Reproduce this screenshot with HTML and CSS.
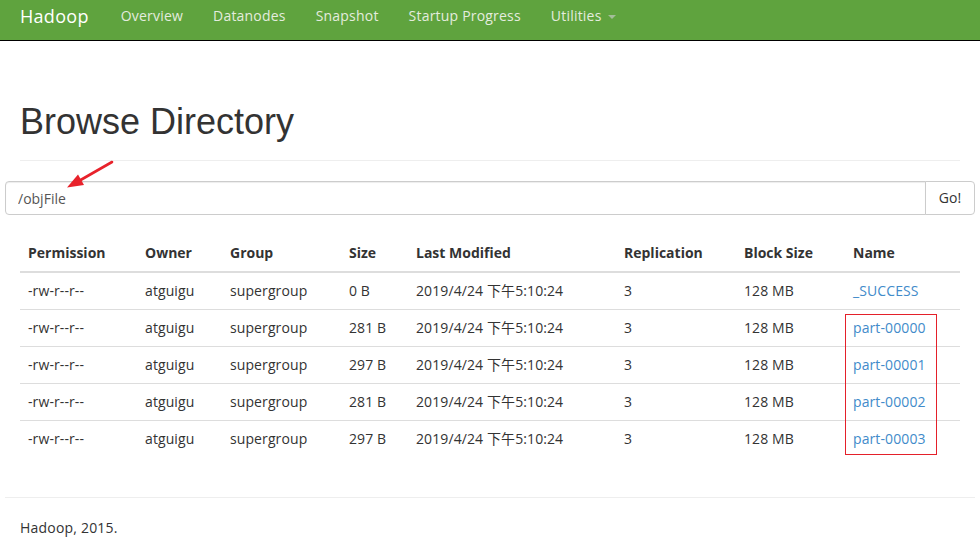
FILE: index.html
```html
<!DOCTYPE html>
<html>
<head>
<meta charset="utf-8">
<title>Browsing HDFS</title>
<link rel="stylesheet" href="styles.css">
</head>
<body>
<header class="navbar">
  <a class="brand" href="#">Hadoop</a>
  <nav class="nav">
    <a href="#">Overview</a>
    <a href="#">Datanodes</a>
    <a href="#">Snapshot</a>
    <a href="#">Startup Progress</a>
    <a href="#">Utilities <span class="caret"></span></a>
  </nav>
</header>

<main class="page">
  <div class="inner">
    <h1 class="page-header">Browse Directory</h1>
  </div>

  <div class="input-group">
    <input class="path" type="text" value="/objFile">
    <button class="go" type="button">Go!</button>
  </div>

  <div class="inner table-wrap">
    <table class="listing">
      <colgroup>
        <col class="c1"><col class="c2"><col class="c3"><col class="c4">
        <col class="c5"><col class="c6"><col class="c7"><col class="c8">
      </colgroup>
      <thead>
        <tr><th>Permission</th><th>Owner</th><th>Group</th><th>Size</th><th>Last Modified</th><th>Replication</th><th>Block Size</th><th>Name</th></tr>
      </thead>
      <tbody>
        <tr><td>-rw-r--r--</td><td>atguigu</td><td>supergroup</td><td>0 B</td><td>2019/4/24 下午5:10:24</td><td>3</td><td>128 MB</td><td><a href="#">_SUCCESS</a></td></tr>
        <tr><td>-rw-r--r--</td><td>atguigu</td><td>supergroup</td><td>281 B</td><td>2019/4/24 下午5:10:24</td><td>3</td><td>128 MB</td><td><a href="#">part-00000</a></td></tr>
        <tr><td>-rw-r--r--</td><td>atguigu</td><td>supergroup</td><td>297 B</td><td>2019/4/24 下午5:10:24</td><td>3</td><td>128 MB</td><td><a href="#">part-00001</a></td></tr>
        <tr><td>-rw-r--r--</td><td>atguigu</td><td>supergroup</td><td>281 B</td><td>2019/4/24 下午5:10:24</td><td>3</td><td>128 MB</td><td><a href="#">part-00002</a></td></tr>
        <tr><td>-rw-r--r--</td><td>atguigu</td><td>supergroup</td><td>297 B</td><td>2019/4/24 下午5:10:24</td><td>3</td><td>128 MB</td><td><a href="#">part-00003</a></td></tr>
      </tbody>
    </table>
    <div class="highlight"></div>
  </div>

  <hr class="footer-rule">
  <div class="inner">
    <p class="footer">Hadoop, 2015.</p>
  </div>
</main>

<svg class="arrow" width="60" height="40" viewBox="60 155 60 40" xmlns="http://www.w3.org/2000/svg">
  <line x1="112" y1="162" x2="78" y2="181.5" stroke="#e8222b" stroke-width="2.6" stroke-linecap="round"/>
  <polygon points="67,187.5 78,174.5 84,185" fill="#e8222b"/>
</svg>
</body>
</html>
```

FILE: styles.css
```css
* { box-sizing: border-box; }

html, body {
  margin: 0;
  padding: 0;
  background: #fff;
}

body {
  font-family: "Open Sans", "Noto Sans", "Noto Sans CJK SC", sans-serif;
  font-size: 14px;
  line-height: 20px;
  color: #333;
}

a { color: #428bca; text-decoration: none; }

/* navbar */
.navbar {
  display: flex;
  align-items: flex-start;
  height: 41px;
  padding: 0 5px;
  background: #5fa33e;
  border-bottom: 1px solid #000;
}

.brand {
  display: block;
  padding: 5px 17px 0 15px;
  font-size: 18px;
  line-height: 22px;
  letter-spacing: 0.3px;
  color: #fff;
}

.nav {
  display: flex;
}

.nav a {
  display: block;
  padding: 6px 15px 0;
  line-height: 20px;
  letter-spacing: 0.2px;
  color: #e4ecde;
}

.caret {
  display: inline-block;
  width: 0;
  height: 0;
  margin-left: 3px;
  vertical-align: middle;
  border-top: 4px solid #a4bd99;
  border-left: 4px solid transparent;
  border-right: 4px solid transparent;
}

/* page */
.page {
  padding: 0 5px;
}

.inner {
  padding: 0 15px;
}

.page-header {
  margin: 61px 0 20px;
  padding-bottom: 18px;
  border-bottom: 1px solid #eee;
  font-family: "Liberation Sans", Arial, sans-serif;
  font-weight: 500;
  font-size: 36px;
  line-height: 40px;
  color: #333;
}

/* input group */
.input-group {
  display: flex;
  height: 34px;
}

.path {
  flex: 1;
  height: 34px;
  padding: 6px 12px;
  border: 1px solid #ccc;
  border-radius: 4px 0 0 4px;
  font: inherit;
  color: #555;
  box-shadow: inset 0 1px 1px rgba(0,0,0,0.075);
  outline: none;
}

.go {
  height: 34px;
  width: 50px;
  padding: 6px 0;
  margin-left: -1px;
  border: 1px solid #ccc;
  border-radius: 0 4px 4px 0;
  background: #fff;
  font: inherit;
  color: #333;
}

/* table */
.table-wrap {
  position: relative;
  margin-top: 20px;
}

.listing {
  width: 940px;
  border-collapse: collapse;
  table-layout: fixed;
}

.c1 { width: 117px; }
.c2 { width: 85px; }
.c3 { width: 119px; }
.c4 { width: 67px; }
.c5 { width: 208px; }
.c6 { width: 120px; }
.c7 { width: 109px; }
.c8 { width: 115px; }

.listing th,
.listing td {
  padding: 8px;
  text-align: left;
  line-height: 20px;
  white-space: nowrap;
}

.listing td {
  letter-spacing: 0.1px;
}

.listing th {
  font-weight: 700;
  border-bottom: 2px solid #ddd;
}

.listing tbody tr + tr td {
  border-top: 1px solid #ddd;
}

.highlight {
  position: absolute;
  left: 840px;
  top: 79px;
  width: 92px;
  height: 141px;
  border: 1px solid #e4202a;
  pointer-events: none;
}

/* footer */
.footer-rule {
  margin: 40px 0 20px;
  border: 0;
  border-top: 1px solid #eee;
}

.footer {
  margin: 0;
  line-height: 20px;
  letter-spacing: 0.2px;
}

.arrow {
  position: absolute;
  left: 60px;
  top: 155px;
}
```
